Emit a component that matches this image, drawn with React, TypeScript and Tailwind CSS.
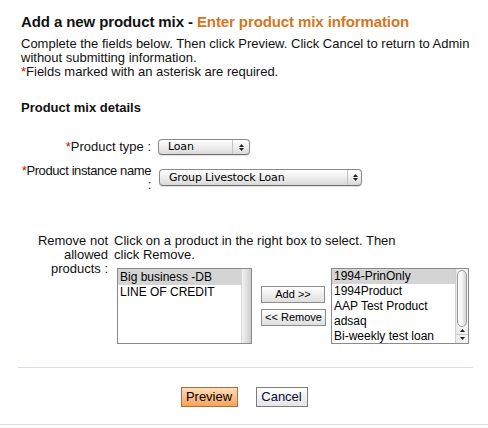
import React from 'react'

function AquaSelect({ value, width, divider }: { value: string; width: string; divider: string }) {
  return (
    <div
      className={`${width} relative rounded-[4px] border border-[#8a8a8a] border-b-[#6f6f6f] bg-gradient-to-b from-white via-[#eeeeee] to-[#d9d9d9] shadow-[0_1px_1px_rgba(0,0,0,0.12)] flex items-center`}
    >
      <span className="pl-[9px] text-[11px] leading-[14px] text-black font-['DejaVu_Sans',sans-serif] tracking-[-0.15px]">
        {value}
      </span>
      <div className={`absolute top-0 bottom-0 ${divider} border-l border-[#c4c4c4] flex flex-col items-center justify-center gap-[1px]`}>
        <svg width="5" height="3" viewBox="0 0 5 3"><path d="M2.5 0L5 3H0z" fill="#222" /></svg>
        <svg width="5" height="3" viewBox="0 0 5 3"><path d="M0 0h5L2.5 3z" fill="#222" /></svg>
      </div>
    </div>
  )
}

export default function App() {
  const right = ['1994-PrinOnly', '1994Product', 'AAP Test Product', 'adsaq', 'Bi-weekly test loan']
  return (
    <div className="w-[488px] h-[428px] bg-white text-[13px] text-[#111] font-['Liberation_Sans',Arial,sans-serif] overflow-hidden">
      <div className="px-[21px] pt-[13px]">
        <h1 className="text-[15px] leading-[18px] font-bold whitespace-nowrap tracking-[-0.1px]">
          Add a new product mix - <span className="text-[#d5761f]">Enter product mix information</span>
        </h1>
        <p className="mt-[5.5px] leading-[14px] whitespace-nowrap">
          Complete the fields below. Then click Preview. Click Cancel to return to Admin
          <br />
          without submitting information.
          <br />
          <span className="text-[#e00000]">*</span>Fields marked with an asterisk are required.
        </p>

        <h2 className="mt-[22px] font-bold leading-[14px]">Product mix details</h2>

        <div className="mt-[24.5px] flex items-center">
          <div className="w-[130px] shrink-0 text-right leading-[14px]">
            <span className="text-[#e00000]">*</span>Product type :
          </div>
          <div className="ml-[7px]">
            <AquaSelect value="Loan" width="w-[92px] h-[16px]" divider="left-[73px] w-[17px]" />
          </div>
        </div>

        <div className="mt-[8.5px] flex items-center">
          <div className="w-[130px] shrink-0 text-right leading-[14px] whitespace-nowrap tracking-[-0.4px]">
            <span className="text-[#e00000]">*</span>Product instance name
            <br />:
          </div>
          <div className="ml-[8px]">
            <AquaSelect value="Group Livestock Loan" width="w-[203px] h-[17px]" divider="left-[187px] w-[15px]" />
          </div>
        </div>

        <div className="mt-[42px] flex">
          <div className="w-[87px] shrink-0 text-right leading-[14px]">
            Remove not
            <br />
            allowed
            <br />
            products :
          </div>
          <div className="ml-[6px] shrink-0">
            <div className="leading-[14px] whitespace-nowrap">
              Click on a product in the right box to select. Then
              <br />
              click Remove.
            </div>
            <div className="mt-[6px] ml-[3px] flex items-center text-[12px] leading-[15px] text-black">
              <div className="w-[135px] h-[76px] shrink-0 border border-[#8a8a8a] flex bg-white">
                <div className="flex-1">
                  <div className="bg-[#d4d4d4] pl-[2px] h-[16px] leading-[16px]">Big business -DB</div>
                  <div className="pl-[2px]">LINE OF CREDIT</div>
                </div>
                <div className="w-[10px] bg-gradient-to-r from-[#f2f2f2] via-[#e0e0e0] to-[#c9c9c9] border-l border-[#d8d8d8]" />
              </div>

              <div className="ml-[9px] w-[64px] shrink-0 flex flex-col gap-[6px] text-[11px] leading-[15px]">
                <button className="w-[64px] h-[17px] border border-[#8c8c8c] bg-gradient-to-b from-white to-[#dedede] text-center">
                  Add &gt;&gt;
                </button>
                <button className="w-[65px] h-[17px] border border-[#8c8c8c] bg-gradient-to-b from-white to-[#dedede] text-center whitespace-nowrap">
                  &lt;&lt; Remove
                </button>
              </div>

              <div className="ml-[6px] w-[138px] h-[76px] shrink-0 border border-[#8a8a8a] flex bg-white">
                <div className="flex-1 overflow-hidden">
                  {right.map((r, i) => (
                    <div key={r} className={`pl-[2px] whitespace-nowrap ${i === 0 ? 'bg-[#d4d4d4]' : ''}`}>
                      {r}
                    </div>
                  ))}
                </div>
                <div className="w-[13px] bg-gradient-to-r from-[#e9e9e9] to-[#f7f7f7] border-l border-[#cfcfcf] flex flex-col">
                  <div className="h-[57px] mx-[1px] mt-[1px] rounded-full border border-[#9a9a9a] bg-gradient-to-r from-white via-[#f4f4f4] to-[#d6d6d6]" />
                  <div className="flex-1" />
                  <div className="h-[8px] flex items-center justify-center border-b border-[#c8c8c8]">
                    <svg width="5" height="3" viewBox="0 0 5 3"><path d="M2.5 0L5 3H0z" fill="#222" /></svg>
                  </div>
                  <div className="h-[8px] flex items-center justify-center">
                    <svg width="5" height="3" viewBox="0 0 5 3"><path d="M0 0h5L2.5 3z" fill="#222" /></svg>
                  </div>
                </div>
              </div>
            </div>
          </div>
        </div>
      </div>

      <div className="mt-[23px] ml-[18px] w-[455px] h-px bg-[#d7dde9]" />

      <div className="mt-[19px] flex justify-center gap-[18px] text-[13px]">
        <button className="w-[57px] h-[20px] border border-[#a8703f] bg-gradient-to-b from-[#fedcb9] to-[#f6a257] text-black leading-[18px]">
          Preview
        </button>
        <button className="w-[52px] h-[20px] border border-[#7d7d7d] bg-gradient-to-b from-white to-[#e4e4e4] text-[#0a0a40] leading-[18px]">
          Cancel
        </button>
      </div>

      <div className="mt-[17px] h-px bg-[#d7dde9]" />
    </div>
  )
}
